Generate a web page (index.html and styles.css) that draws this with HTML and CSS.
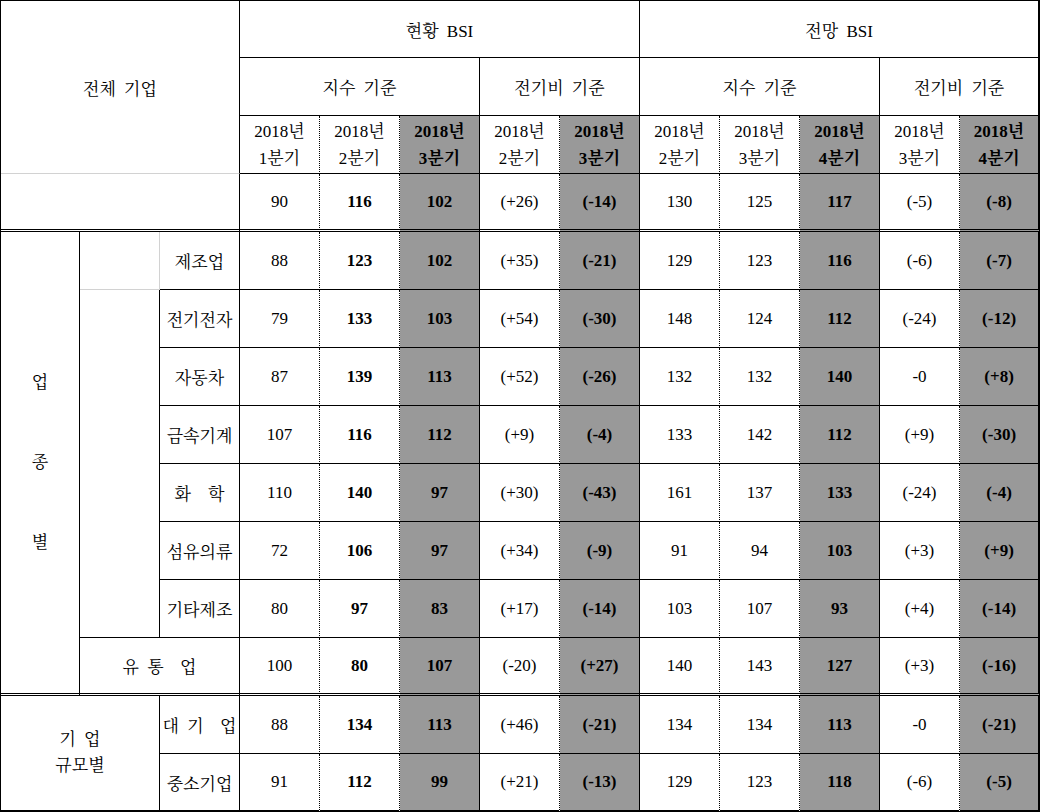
FILE: index.html
```html
<!DOCTYPE html>
<html lang="ko">
<head>
<meta charset="utf-8">
<title>BSI</title>
<link rel="stylesheet" href="styles.css">
</head>
<body>
<table class="bsi">
  <colgroup>
    <col class="c1"><col><col><col><col><col><col><col><col><col><col><col><col>
  </colgroup>
  <tr class="r1">
    <td colspan="3" rowspan="3" class="lgb">전체 기업</td>
    <td colspan="5">현황 BSI</td>
    <td colspan="5" class="last">전망 BSI</td>
  </tr>
  <tr>
    <td colspan="3">지수 기준</td>
    <td colspan="2">전기비 기준</td>
    <td colspan="3">지수 기준</td>
    <td colspan="2" class="last">전기비 기준</td>
  </tr>
  <tr class="hd">
    <td class="dot">2018년<br>1분기</td>
    <td class="dot">2018년<br>2분기</td>
    <td class="sh">2018년<br>3분기</td>
    <td class="dot">2018년<br>2분기</td>
    <td class="sh">2018년<br>3분기</td>
    <td class="dot">2018년<br>2분기</td>
    <td class="dot">2018년<br>3분기</td>
    <td class="sh">2018년<br>4분기</td>
    <td class="dot">2018년<br>3분기</td>
    <td class="sh last">2018년<br>4분기</td>
  </tr>
  <tr class="dbl">
    <td colspan="3"></td>
    <td class="dot">90</td><td class="dot b">116</td><td class="sh">102</td><td class="dot">(+26)</td><td class="sh">(-14)</td>
    <td class="dot">130</td><td class="dot">125</td><td class="sh">117</td><td class="dot">(-5)</td><td class="sh last">(-8)</td>
  </tr>
  <tr>
    <td rowspan="8" class="vert dblb"><span>업</span><span>종</span><span>별</span></td>
    <td class="lg"></td>
    <td>제조업</td>
    <td class="dot">88</td><td class="dot b">123</td><td class="sh">102</td><td class="dot">(+35)</td><td class="sh">(-21)</td>
    <td class="dot">129</td><td class="dot">123</td><td class="sh">116</td><td class="dot">(-6)</td><td class="sh last">(-7)</td>
  </tr>
  <tr>
    <td rowspan="6"></td>
    <td>전기전자</td>
    <td class="dot">79</td><td class="dot b">133</td><td class="sh">103</td><td class="dot">(+54)</td><td class="sh">(-30)</td>
    <td class="dot">148</td><td class="dot">124</td><td class="sh">112</td><td class="dot">(-24)</td><td class="sh last">(-12)</td>
  </tr>
  <tr>
    <td>자동차</td>
    <td class="dot">87</td><td class="dot b">139</td><td class="sh">113</td><td class="dot">(+52)</td><td class="sh">(-26)</td>
    <td class="dot">132</td><td class="dot">132</td><td class="sh">140</td><td class="dot">-0</td><td class="sh last">(+8)</td>
  </tr>
  <tr>
    <td>금속기계</td>
    <td class="dot">107</td><td class="dot b">116</td><td class="sh">112</td><td class="dot">(+9)</td><td class="sh">(-4)</td>
    <td class="dot">133</td><td class="dot">142</td><td class="sh">112</td><td class="dot">(+9)</td><td class="sh last">(-30)</td>
  </tr>
  <tr>
    <td>화　학</td>
    <td class="dot">110</td><td class="dot b">140</td><td class="sh">97</td><td class="dot">(+30)</td><td class="sh">(-43)</td>
    <td class="dot">161</td><td class="dot">137</td><td class="sh">133</td><td class="dot">(-24)</td><td class="sh last">(-4)</td>
  </tr>
  <tr>
    <td>섬유의류</td>
    <td class="dot">72</td><td class="dot b">106</td><td class="sh">97</td><td class="dot">(+34)</td><td class="sh">(-9)</td>
    <td class="dot">91</td><td class="dot">94</td><td class="sh">103</td><td class="dot">(+3)</td><td class="sh last">(+9)</td>
  </tr>
  <tr>
    <td>기타제조</td>
    <td class="dot">80</td><td class="dot b">97</td><td class="sh">83</td><td class="dot">(+17)</td><td class="sh">(-14)</td>
    <td class="dot">103</td><td class="dot">107</td><td class="sh">93</td><td class="dot">(+4)</td><td class="sh last">(-14)</td>
  </tr>
  <tr class="dbl">
    <td colspan="2">유 통&nbsp; 업</td>
    <td class="dot">100</td><td class="dot b">80</td><td class="sh">107</td><td class="dot">(-20)</td><td class="sh">(+27)</td>
    <td class="dot">140</td><td class="dot">143</td><td class="sh">127</td><td class="dot">(+3)</td><td class="sh last">(-16)</td>
  </tr>
  <tr>
    <td colspan="2" rowspan="2" class="size endb">기 업<br>규모별</td>
    <td>대 기&nbsp; 업</td>
    <td class="dot">88</td><td class="dot b">134</td><td class="sh">113</td><td class="dot">(+46)</td><td class="sh">(-21)</td>
    <td class="dot">134</td><td class="dot">134</td><td class="sh">113</td><td class="dot">-0</td><td class="sh last">(-21)</td>
  </tr>
  <tr class="end">
    <td>중소기업</td>
    <td class="dot">91</td><td class="dot b">112</td><td class="sh">99</td><td class="dot">(+21)</td><td class="sh">(-13)</td>
    <td class="dot">129</td><td class="dot">123</td><td class="sh">118</td><td class="dot">(-6)</td><td class="sh last">(-5)</td>
  </tr>
</table>
</body>
</html>
```

FILE: styles.css
```css
html, body {
  margin: 0;
  padding: 0;
  background: #fff;
}

.bsi {
  border-collapse: separate;
  border-spacing: 0;
  table-layout: fixed;
  width: 1040px;
  border-top: 1px solid #000;
  border-left: 1px solid #000;
  font-family: "Liberation Serif", "Noto Serif CJK KR", "Noto Sans CJK KR", serif;
  font-size: 17px;
  word-spacing: 4px;
  color: #000;
}

.bsi col {
  width: 80px;
}

.bsi col.c1 {
  width: 79px;
}

.bsi tr {
  height: 58px;
}

.bsi tr.r1 {
  height: 57px;
}

.bsi td {
  padding: 0;
  border-right: 1px solid #000;
  border-bottom: 1px solid #000;
  text-align: center;
  vertical-align: middle;
  white-space: nowrap;
}

.bsi td.dot {
  border-right: 1px dotted #000;
}

.bsi td.sh {
  background: #999999;
  font-weight: bold;
}

.bsi td.b {
  font-weight: bold;
}

.bsi td.last {
  border-right: 2px solid #000;
}

.bsi td.lgb {
  border-bottom-color: #d2d2d2;
}

.bsi td.lg {
  border-right-color: #d2d2d2;
  border-bottom-color: #d2d2d2;
}

.bsi tr.hd td {
  line-height: 27px;
}

.bsi tr.dbl td,
.bsi td.dblb {
  border-bottom: 3px double #000;
}

.bsi tr.end td,
.bsi td.endb {
  border-bottom-width: 2px;
}

.bsi td.vert span {
  display: block;
  line-height: 80px;
}

.bsi td.size {
  line-height: 26px;
}
```
